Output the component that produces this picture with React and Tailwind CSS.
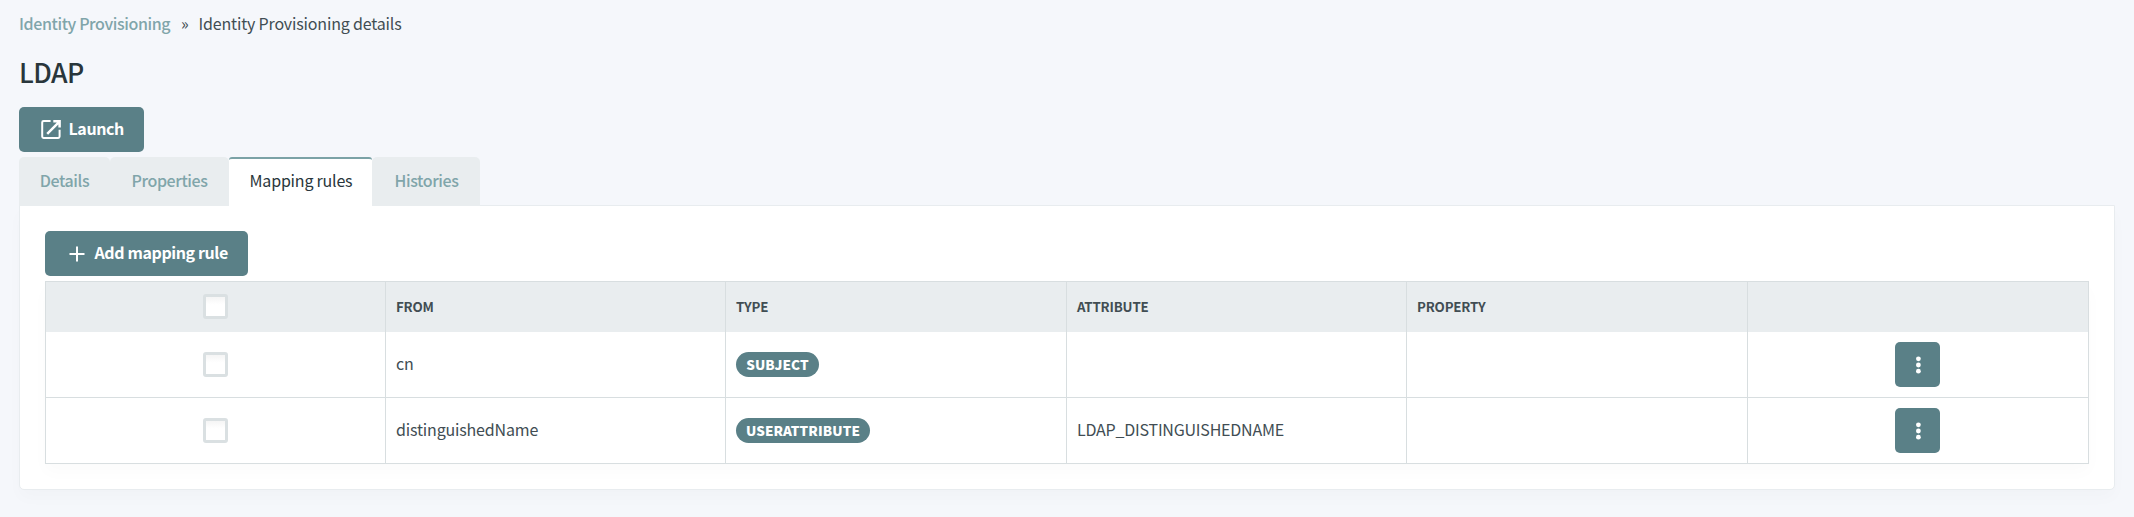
const rows = [
  { from: "cn", type: "SUBJECT", badge: "w-[83px]", attribute: "" },
  { from: "distinguishedName", type: "USERATTRIBUTE", badge: "w-[134px]", attribute: "LDAP_DISTINGUISHEDNAME" },
];

function LaunchIcon() {
  return (
    <svg viewBox="0 0 20 20" className="h-5 w-5 shrink-0" fill="none" stroke="white" strokeWidth="2">
      <path d="M9.6 1.1H2.6Q1.2 1.1 1.2 2.5V16.6Q1.2 18 2.6 18H17.2Q18.6 18 18.6 16.6V9.8" />
      <path d="M12.3 1.3H18.6V7.6M18.2 1.8L6.2 13.8" strokeWidth="2.5" />
    </svg>
  );
}

function PlusIcon() {
  return (
    <svg viewBox="0 0 16 16" className="h-4 w-4 shrink-0" fill="none" stroke="white" strokeWidth="2">
      <path d="M8 0.5V15.5M0.5 8H15.5" />
    </svg>
  );
}

function MoreIcon() {
  return (
    <svg viewBox="0 0 6 18" className="h-[18px] w-[6px]" fill="white">
      <circle cx="3.4" cy="2.8" r="2.4" />
      <circle cx="3.4" cy="9" r="2.4" />
      <circle cx="3.4" cy="15.2" r="2.4" />
    </svg>
  );
}

function Check() {
  return (
    <span className="mx-auto block h-[25px] w-[25px] rounded-[3px] border-[3px] border-[#dae0e2] bg-linear-to-b from-[#f5f5f5] to-white to-40%" />
  );
}

const th = "border-r border-[#d8dee0] px-[10px] pb-px text-left text-[13.3px] leading-5 font-bold";
const td = "border-r border-b border-[#d8dee0] px-[10px] text-[16px]";

export default function App() {
  return (
    <div className="h-[517px] w-full overflow-hidden bg-[#f5f7fb] px-[19px] font-['Noto_Sans_CJK_SC',sans-serif] text-[16px] leading-6 tracking-[-0.17px] text-[#414d53]">
      <nav className="flex h-12 items-center pb-[2px]">
        <span className="w-[162px] font-medium tracking-[-0.39px] text-[#80a5aa]">Identity Provisioning</span>
        <span className="w-[17.5px]">»</span>
        <span>Identity Provisioning details</span>
      </nav>
      <h1 className="flex h-[59px] items-start pt-[9px] text-[26.6px] leading-[30px] font-medium tracking-[-0.6px] text-[#29363b]">LDAP</h1>
      <button className="flex h-[45px] w-[125px] items-center rounded-[5px] bg-[#5a8087] pl-[22px] font-bold tracking-[-0.4px] text-white">
        <LaunchIcon />
        <span className="mb-[3px] ml-[7.5px]">Launch</span>
      </button>
      <div className="mt-[5px] flex h-12 font-medium tracking-[-0.4px] text-[#80a5aa]">
        <div className="flex h-[49px] w-[91px] items-center justify-center rounded-t-[5px] bg-[#e9edef] pb-[3px]">Details</div>
        <div className="flex h-[49px] w-[119px] items-center justify-center rounded-t-[5px] bg-[#e9edef] pb-[3px]">Properties</div>
        <div className="z-10 flex h-[49px] w-[143px] items-center justify-center rounded-t-[3px] border-t-2 border-[#7ba2a6] bg-white pb-[5px] pl-px font-normal tracking-[-0.2px] text-[#29363b]">Mapping rules</div>
        <div className="flex h-[49px] w-[108px] items-center justify-center rounded-t-[5px] bg-[#e9edef] pb-[3px] pl-px">Histories</div>
      </div>
      <section className="h-[285px] w-[2096px] rounded-b-[5px] border border-[#e8ecef] bg-white px-[25px] pt-[25px] shadow-[0_8px_16px_rgba(0,0,0,0.02)]">
        <button className="flex h-[45px] w-[203px] items-center rounded-[5px] bg-[#5a8087] pl-6 font-bold tracking-[-0.4px] text-white">
          <PlusIcon />
          <span className="mb-[3px] ml-[9.5px]">Add mapping rule</span>
        </button>
        <table className="mt-[5px] w-[2044px] table-fixed border-separate border-spacing-0 border-t border-l border-[#d8dee0] shadow-[0_8px_16px_rgba(0,0,0,0.02)]">
          <colgroup>
            <col className="w-[340px]" />
            <col className="w-[340px]" />
            <col className="w-[341px]" />
            <col className="w-[340px]" />
            <col className="w-[341px]" />
            <col className="w-[341px]" />
          </colgroup>
          <thead>
            <tr className="h-[50px] bg-[#e9edef]">
              <th className={th}><Check /></th>
              <th className={th}>FROM</th>
              <th className={th}>TYPE</th>
              <th className={th}>ATTRIBUTE</th>
              <th className={th}>PROPERTY</th>
              <th className={th}></th>
            </tr>
          </thead>
          <tbody>
            {rows.map((r) => (
              <tr key={r.from} className="h-[66px]">
                <td className={td}><Check /></td>
                <td className={td}><div className="pb-[3px]">{r.from}</div></td>
                <td className={td}>
                  <span className={`flex h-[25px] items-center justify-center rounded-full bg-[#5a8087] pb-px text-[13.5px] font-black tracking-[0.1px] text-white ${r.badge}`}>{r.type}</span>
                </td>
                <td className={td}><div className="pb-[3px] tracking-[-0.21px]">{r.attribute}</div></td>
                <td className={td}></td>
                <td className={td}>
                  <div className="flex justify-center pr-px">
                    <button className="flex h-[45px] w-[45px] items-center justify-center rounded-[5px] bg-[#5a8087]"><MoreIcon /></button>
                  </div>
                </td>
              </tr>
            ))}
          </tbody>
        </table>
      </section>
    </div>
  );
}
